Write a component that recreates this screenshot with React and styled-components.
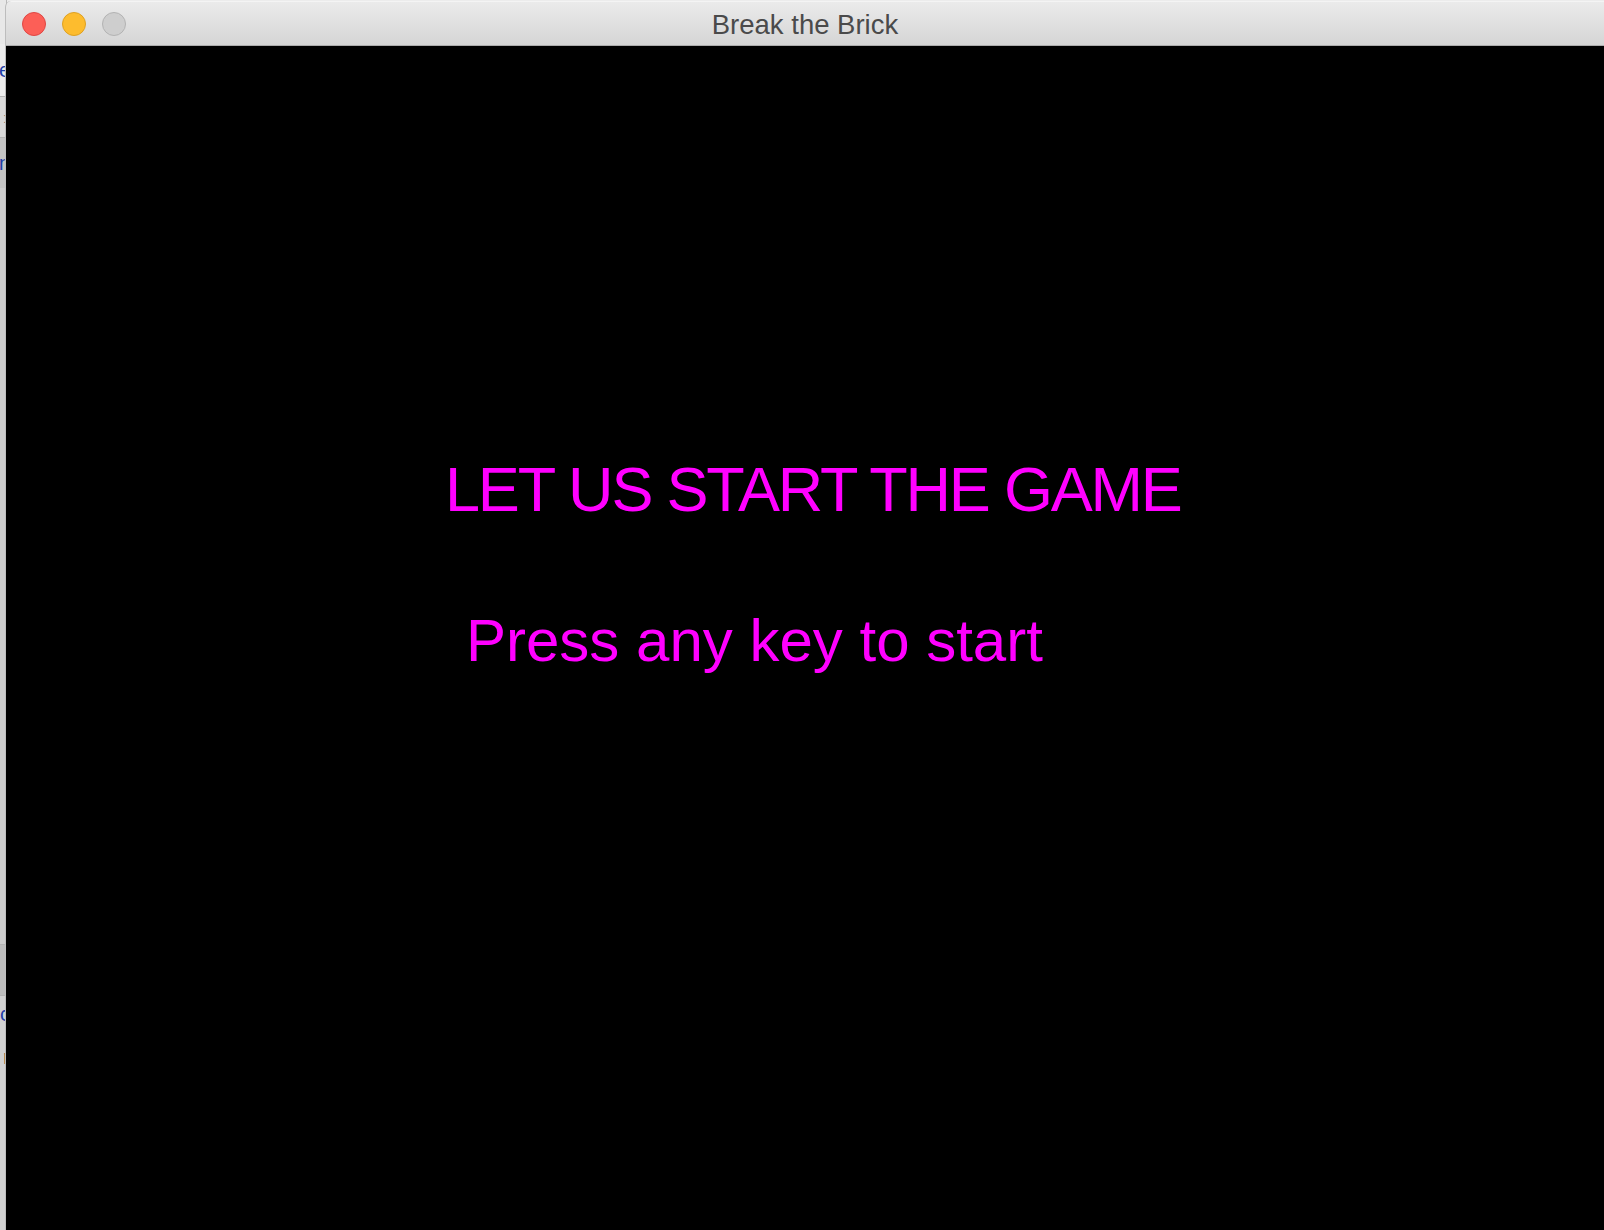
import styled, { createGlobalStyle } from 'styled-components'

const GlobalStyle = createGlobalStyle`
  html, body {
    margin: 0;
    padding: 0;
    background: #e9e9e9;
    overflow: hidden;
  }
`

const Desktop = styled.div`
  position: relative;
  width: 1604px;
  height: 1230px;
  overflow: hidden;
  background: #ececec;
  font-family: "Liberation Sans", Arial, sans-serif;
`

// the window behind the game, only a sliver of it shows on the left
const BackWindow = styled.div`
  position: absolute;
  left: -294px;
  top: 0;
  width: 300px;
  height: 1230px;
  display: flex;
  flex-direction: column;
  background: #ececec;
  border-right: 1px solid #b9b9b9;
`
const BackRow = styled.div`
  height: ${p => p.$h}px;
  flex: none;
  display: flex;
  align-items: center;
  justify-content: flex-end;
  background: ${p => p.$bg || 'transparent'};
  border-bottom: ${p => (p.$line ? '1px solid #b4b4b4' : 'none')};
  font-size: 20px;
  color: #1f3fa8;
  overflow: hidden;
`
const Glyph = styled.span`
  margin-right: -4px;
  color: ${p => p.$color || '#1f3fa8'};
`

const Window = styled.div`
  position: absolute;
  left: 6px;
  top: 1px;
  width: 1604px;
  height: 1240px;
  display: flex;
  flex-direction: column;
  border-radius: 6px 6px 0 0;
  overflow: hidden;
  box-shadow: -1px 0 0 #bdbdbd;
`
const TitleBar = styled.div`
  position: relative;
  flex: none;
  display: flex;
  align-items: center;
  justify-content: center;
  background: linear-gradient(#ebebeb, #d5d5d5);
  border-top: 1px solid #f4f4f4;
  border-bottom: 1px solid #adadad;
  box-sizing: border-box;
  height: 45px;
`
const Lights = styled.div`
  position: absolute;
  left: 16px;
  top: 10px;
  display: flex;
  gap: 16px;
`
const Light = styled.span`
  width: 24px;
  height: 24px;
  border-radius: 50%;
  box-sizing: border-box;
  background: ${p => p.$bg};
  border: 1px solid ${p => p.$border};
`
const Title = styled.div`
  font-size: 27.5px;
  line-height: 44px;
  padding-top: 2px;
  margin-right: 6px;
  color: #4a4a4a;
`

const Canvas = styled.div`
  flex: 1;
  background: #000;
  display: flex;
  flex-direction: column;
  align-items: flex-start;
  padding-top: 412px;
`
const Heading = styled.div`
  font-size: 63px;
  line-height: 1;
  letter-spacing: -2.2px;
  color: #ff00ff;
  margin-left: 439px;
  white-space: nowrap;
`
const Prompt = styled.div`
  font-size: 60px;
  line-height: 1;
  color: #ff00ff;
  margin-left: 460px;
  margin-top: 90px;
  white-space: nowrap;
`

export default function App() {
  return (
    <>
      <GlobalStyle />
      <Desktop>
        <BackWindow>
          <BackRow $h={44} $bg="#e8e8e8" />
          <BackRow $h={52} $line>
            <Glyph>e</Glyph>
          </BackRow>
          <BackRow $h={40} $bg="#d9d9d9" $line>
            <Glyph $color="#6a6a6a">›</Glyph>
          </BackRow>
          <BackRow $h={50} $bg="#c4c4c4">
            <Glyph>n</Glyph>
          </BackRow>
          <BackRow $h={756} $bg="#cdcdcd" $line />
          <BackRow $h={50} $bg="#bdbdbd" $line />
          <BackRow $h={36} $bg="#d2d2d2">
            <Glyph>c</Glyph>
          </BackRow>
          <BackRow $h={50} $bg="#d2d2d2">
            <Glyph $color="#222">r</Glyph>
          </BackRow>
          <BackRow $h={152} $bg="#d2d2d2" />
        </BackWindow>
        <Window>
          <TitleBar>
            <Lights>
              <Light $bg="#fc5f57" $border="#df4744" />
              <Light $bg="#fdbc2e" $border="#dea123" />
              <Light $bg="#cecece" $border="#b3b3b3" />
            </Lights>
            <Title>Break the Brick</Title>
          </TitleBar>
          <Canvas>
            <Heading>LET US START THE GAME</Heading>
            <Prompt>Press any key to start</Prompt>
          </Canvas>
        </Window>
      </Desktop>
    </>
  )
}
